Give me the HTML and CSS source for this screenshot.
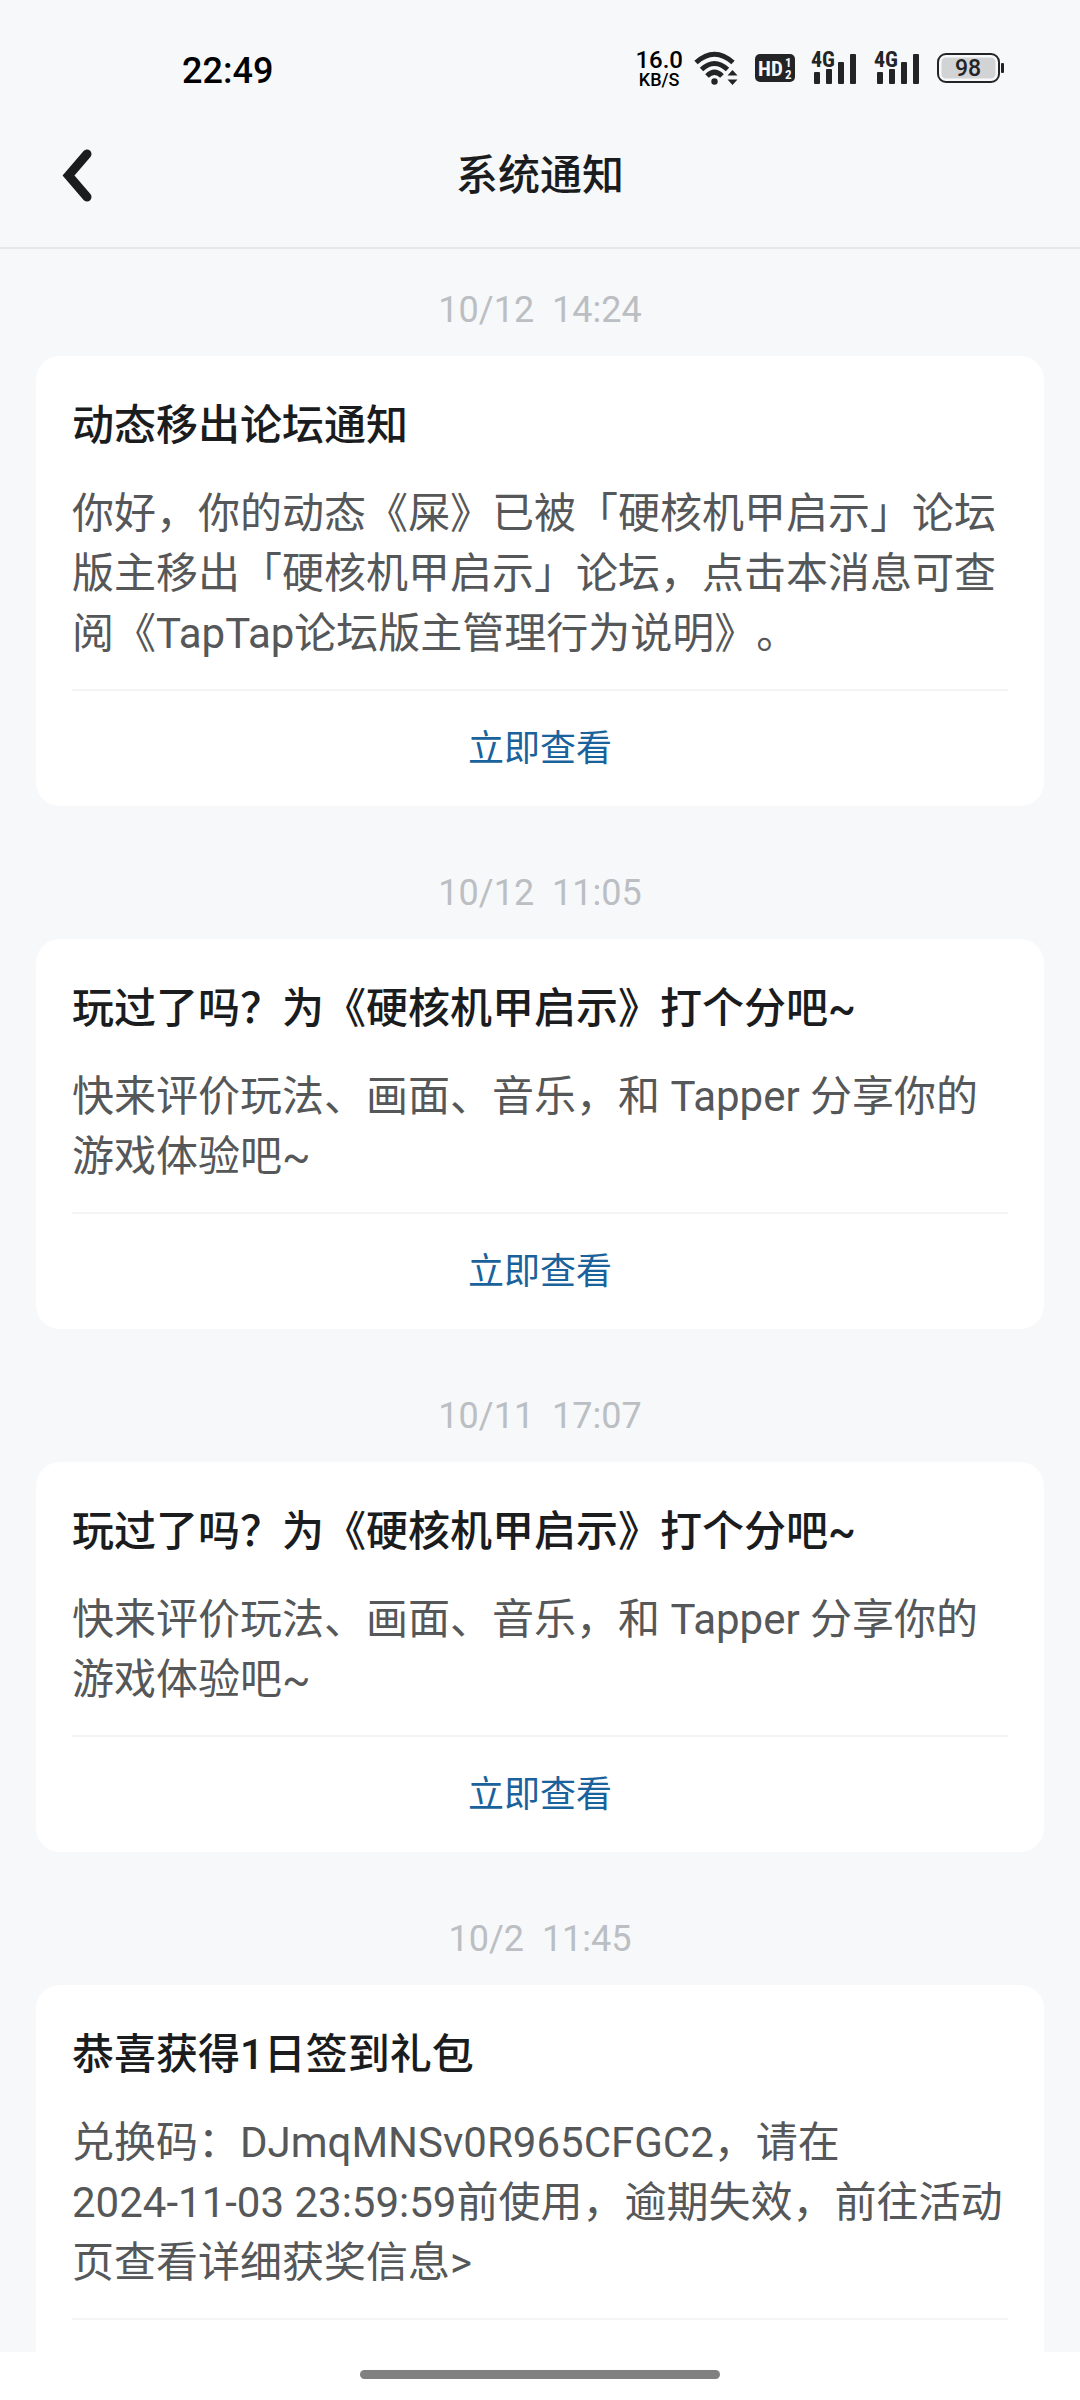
FILE: index.html
```html
<!DOCTYPE html>
<html lang="zh-CN">
<head>
<meta charset="utf-8">
<meta name="viewport" content="width=device-width, initial-scale=1">
<title>系统通知</title>
<link rel="stylesheet" href="styles.css">
</head>
<body>
<div class="screen">
  <div class="status-bar">
    <time class="clock">22:49</time>
    <div class="status-icons">
      <div class="net-speed"><span class="speed-value">16.0</span><span class="speed-unit">KB/S</span></div>
      <svg class="wifi" width="45" height="36" viewBox="0 0 45 36" aria-hidden="true">
        <g fill="none" stroke="#222426" stroke-width="5">
          <path d="M2 12.500Q20.500 -4 39 12.500"/>
          <path d="M7.500 19.500Q20.500 7.500 33.500 19.500"/>
          <path d="M13 26Q20.500 18.500 28 26"/>
        </g>
        <circle cx="20.500" cy="31.500" r="3.200" fill="#222426"/>
        <path d="M33.500 25.500L38.500 20l5 5.500zM33.500 29.500l5 5.500 5-5.500z" fill="#222426"/>
      </svg>
      <svg class="hd" width="40" height="28" viewBox="0 0 40 28" aria-hidden="true">
        <rect width="40" height="28" rx="5" fill="#222426"/>
        <g fill="#f7f8fa" class="svg-label">
          <text x="3" y="22" font-size="21">HD</text>
          <text x="30" y="13" font-size="13">1</text>
          <text x="30" y="25" font-size="13">2</text>
        </g>
      </svg>
      <svg class="signal" width="47" height="34" viewBox="0 0 47 34" aria-hidden="true">
        <g fill="#222426">
          <text class="svg-label" x="0" y="16" font-size="22">4G</text>
          <rect x="3" y="21" width="6" height="12" rx="1"/>
          <rect x="15" y="18" width="6" height="15" rx="1"/>
          <rect x="27" y="11" width="6" height="22" rx="1"/>
          <rect x="39" y="3" width="6" height="30" rx="1"/>
        </g>
      </svg>
      <svg class="signal" width="47" height="34" viewBox="0 0 47 34" aria-hidden="true">
        <g fill="#222426">
          <text class="svg-label" x="0" y="16" font-size="22">4G</text>
          <rect x="3" y="21" width="6" height="12" rx="1"/>
          <rect x="15" y="18" width="6" height="15" rx="1"/>
          <rect x="27" y="11" width="6" height="22" rx="1"/>
          <rect x="39" y="3" width="6" height="30" rx="1"/>
        </g>
      </svg>
      <svg class="battery" width="68" height="30" viewBox="0 0 68 30" aria-hidden="true">
        <rect x="1" y="1" width="61" height="28" rx="8" fill="none" stroke="#222426" stroke-width="2"/>
        <rect x="4.500" y="4.500" width="54" height="21" rx="4.500" fill="#d2d3d5"/>
        <rect x="64" y="10" width="3" height="10" rx="1" fill="#222426"/>
        <text class="svg-number" x="31" y="23" font-size="23" text-anchor="middle" fill="#222426">98</text>
      </svg>
    </div>
  </div>

  <header class="app-bar">
    <button class="back" type="button" aria-label="返回">
      <svg width="36" height="60" viewBox="0 0 36 60" aria-hidden="true">
        <path d="M27 8L8.500 29.500 27 51" fill="none" stroke="#1a1c1e" stroke-width="9" stroke-linecap="round" stroke-linejoin="miter"/>
      </svg>
    </button>
    <h1 class="page-title">系统通知</h1>
  </header>

  <main class="feed">
    <section class="notice">
      <time class="notice-time">10/12  14:24</time>
      <article class="card">
        <h2 class="card-title">动态移出论坛通知</h2>
        <p class="card-text">你好，你的动态《屎》已被「硬核机甲启示」论坛版主移出「硬核机甲启示」论坛，点击本消息可查阅《TapTap论坛版主管理行为说明》。</p>
        <div class="card-footer"><a class="card-link" href="#">立即查看</a></div>
      </article>
    </section>
    <section class="notice">
      <time class="notice-time">10/12  11:05</time>
      <article class="card">
        <h2 class="card-title">玩过了吗？为《硬核机甲启示》打个分吧~</h2>
        <p class="card-text">快来评价玩法、画面、音乐，和 Tapper 分享你的游戏体验吧~</p>
        <div class="card-footer"><a class="card-link" href="#">立即查看</a></div>
      </article>
    </section>
    <section class="notice">
      <time class="notice-time">10/11  17:07</time>
      <article class="card">
        <h2 class="card-title">玩过了吗？为《硬核机甲启示》打个分吧~</h2>
        <p class="card-text">快来评价玩法、画面、音乐，和 Tapper 分享你的游戏体验吧~</p>
        <div class="card-footer"><a class="card-link" href="#">立即查看</a></div>
      </article>
    </section>
    <section class="notice">
      <time class="notice-time">10/2  11:45</time>
      <article class="card">
        <h2 class="card-title">恭喜获得1日签到礼包</h2>
        <p class="card-text">兑换码：DJmqMNSv0R965CFGC2，请在<br>2024-11-03 23:59:59前使用，逾期失效，前往活动页查看详细获奖信息&gt;</p>
        <div class="card-footer"></div>
      </article>
    </section>
  </main>

  <div class="nav-bar"><span class="nav-handle"></span></div>
</div>
</body>
</html>
```
FILE: styles.css
```css
* {
  box-sizing: border-box;
}

body {
  margin: 0;
  background: #f7f8fa;
  color: #1a1c1e;
  font-family: Roboto, "Noto Sans CJK SC", sans-serif;
  text-spacing-trim: space-all;
}

.screen {
  display: flex;
  flex-direction: column;
  height: 100vh;
}

/* System status bar */
.status-bar {
  display: flex;
  align-items: center;
  justify-content: space-between;
  height: 104px;
  padding: 32px 75px 0 182px;
}

.clock {
  padding-top: 6px;
  color: #000;
  font-size: 36px;
  font-weight: 500;
  line-height: 42px;
}

.status-icons {
  display: flex;
  align-items: center;
  gap: 16px;
}

.net-speed {
  display: flex;
  flex-direction: column;
  align-items: center;
  margin-right: -5px;
  padding-top: 4px;
  color: #000;
  font-weight: 500;
}

.speed-value {
  font-size: 24px;
  line-height: 20px;
}

.speed-unit {
  font-size: 18px;
  line-height: 20px;
}

.signal {
  overflow: visible;
}

.svg-label {
  font-family: "Roboto Condensed", "Liberation Sans Narrow", Roboto, sans-serif;
  font-weight: 700;
}

.svg-number {
  font-weight: 500;
}

/* Title bar */
.app-bar {
  display: grid;
  grid-template-columns: 60px 1fr 60px;
  align-items: center;
  height: 145px;
  padding: 0 60px;
  border-bottom: 2px solid #e5e7e9;
}

.back {
  display: flex;
  padding: 0;
  border: 0;
  background: none;
  cursor: pointer;
}

.page-title {
  margin: 0;
  font-size: 42px;
  font-weight: 500;
  line-height: 60px;
  text-align: center;
}

/* Notifications */
.feed {
  display: flex;
  flex: 1;
  flex-direction: column;
  gap: 66px;
  min-height: 0;
  padding: 40px 36px;
  overflow-y: auto;
  scrollbar-width: none;
}

.notice {
  display: flex;
  flex-direction: column;
  gap: 25px;
}

.notice-time {
  color: #bbbec2;
  font-size: 36px;
  line-height: 42px;
  text-align: center;
  white-space: pre;
}

.card {
  padding: 38px 36px 0;
  border-radius: 24px;
  background: #fff;
}

.card-title {
  margin: 0 0 27px;
  font-size: 42px;
  font-weight: 500;
  line-height: 63px;
}

.card-text {
  margin: 0 0 25px;
  color: #555759;
  font-size: 42px;
  line-height: 60px;
}

.card-footer {
  height: 117px;
  border-top: 2px solid #f3f4f5;
}

.card-link {
  display: block;
  color: #1a629b;
  font-size: 36px;
  line-height: 117px;
  text-align: center;
  text-decoration: none;
}

/* Gesture bar */
.nav-bar {
  display: flex;
  flex: none;
  justify-content: center;
  height: 48px;
  padding-top: 18px;
  background: #fff;
}

.nav-handle {
  width: 33.333%;
  height: 9px;
  border-radius: 5px;
  background: #808080;
}
```
